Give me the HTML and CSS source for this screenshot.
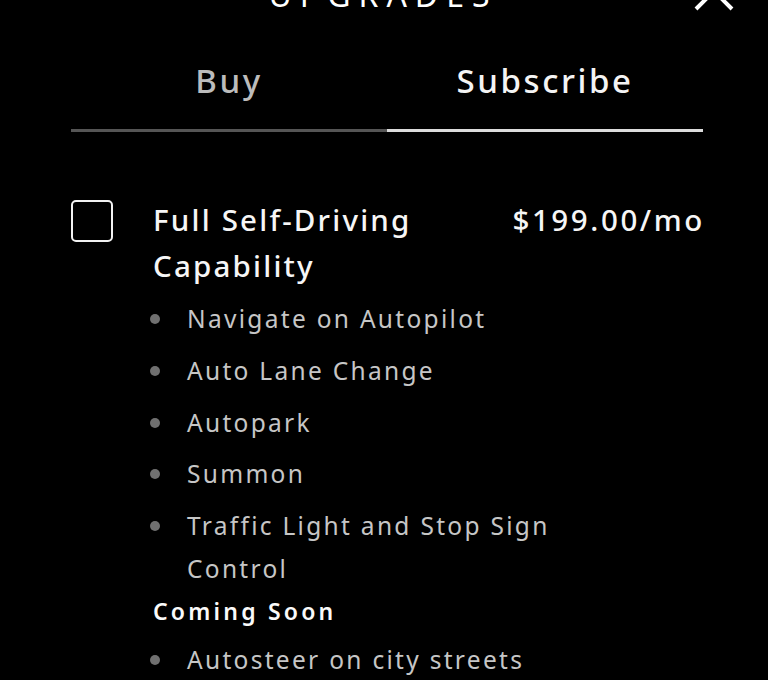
FILE: index.html
```html
<!DOCTYPE html>
<html lang="en">
<head>
  <meta charset="UTF-8">
  <meta name="viewport" content="width=device-width, initial-scale=1.0">
  <title>Upgrades</title>
  <link rel="stylesheet" href="styles.css">
</head>
<body>
  <div class="sheet">
    <header class="sheet-header">
      <span></span>
      <h1 class="sheet-title">UPGRADES</h1>
      <button class="close-btn" aria-label="Close">
        <svg width="40" height="40" viewBox="0 0 40 40">
          <path d="M2 2 L38 38 M38 2 L2 38" stroke="#fff" stroke-width="4" fill="none"/>
        </svg>
      </button>
    </header>

    <nav class="tabs">
      <button class="tab">Buy</button>
      <button class="tab active">Subscribe</button>
    </nav>

    <div class="upgrade">
      <span class="checkbox"></span>
      <div class="upgrade-body">
        <div class="upgrade-head">
          <span class="upgrade-name">Full Self-Driving Capability</span>
          <span class="upgrade-price">$199.00/mo</span>
        </div>
        <ul class="features">
          <li>Navigate on Autopilot</li>
          <li>Auto Lane Change</li>
          <li>Autopark</li>
          <li>Summon</li>
          <li>Traffic Light and Stop Sign Control</li>
        </ul>
        <p class="features-label">Coming Soon</p>
        <ul class="features soon">
          <li>Autosteer on city streets</li>
        </ul>
      </div>
    </div>
  </div>
</body>
</html>
```

FILE: styles.css
```css
body {
  margin: 0;
  padding: 0;
  background-color: #000;
  color: #f2f2f2;
  font-family: 'Noto Sans', 'Open Sans', sans-serif;
  overflow: hidden;
}
.sheet {
  width: 632px;
  margin-left: 71px;
}
.sheet-header {
  display: grid;
  grid-template-columns: 1fr auto 1fr;
  height: 50px;
  margin-top: -30px;
}
.sheet-title {
  margin: 0 8px 0 0;
  font-size: 32px;
  font-weight: 400;
  line-height: 50px;
  letter-spacing: 8px;
  color: #fff;
}
.close-btn {
  justify-self: end;
  align-self: start;
  margin-top: 1px;
  margin-right: -31px;
  padding: 0;
  background: transparent;
  border: none;
  width: 40px;
  height: 40px;
}
.close-btn svg {
  display: block;
}
.tabs {
  display: grid;
  grid-template-columns: 1fr 1fr;
  margin-top: 41px;
}
.tab {
  padding: 0 0 28px;
  background: transparent;
  border: none;
  border-bottom: 3px solid #555;
  font-family: inherit;
  font-size: 33px;
  font-weight: 500;
  line-height: 40px;
  letter-spacing: 2.6px;
  color: #bcbcbc;
}
.tab.active {
  color: #f4f4f4;
  border-bottom-color: #dcdcdc;
}
.upgrade {
  display: flex;
  margin-top: 65px;
}
.checkbox {
  flex: none;
  width: 42px;
  height: 42px;
  margin-top: 3px;
  margin-right: 40px;
  box-sizing: border-box;
  border: 2px solid #f2f2f2;
  border-radius: 5px;
}
.upgrade-body {
  flex: 1;
}
.upgrade-head {
  display: flex;
  justify-content: space-between;
  font-size: 29.5px;
  font-weight: 500;
  line-height: 46px;
  letter-spacing: 2.2px;
  color: #f6f6f6;
}
.upgrade-name {
  max-width: 340px;
}
.upgrade-price {
  margin-right: -2px;
  letter-spacing: 2.6px;
}
.features {
  list-style: none;
  margin: 8px 0 0;
  padding: 0;
  max-width: 440px;
}
.features li {
  display: flex;
  margin-bottom: 8.75px;
  font-size: 24.5px;
  line-height: 43px;
  letter-spacing: 2.3px;
  color: #c6c6c6;
}
.features li:last-child {
  margin-bottom: 0;
}
.features li::before {
  content: "";
  flex: none;
  width: 10px;
  height: 10px;
  margin: 17px 27px 0 -3px;
  border-radius: 50%;
  background-color: #707070;
}
.features-label {
  margin: 0;
  font-size: 23px;
  font-weight: 600;
  line-height: 43px;
  letter-spacing: 3.2px;
  color: #fafafa;
}
.features.soon {
  margin-top: 5px;
}
```
